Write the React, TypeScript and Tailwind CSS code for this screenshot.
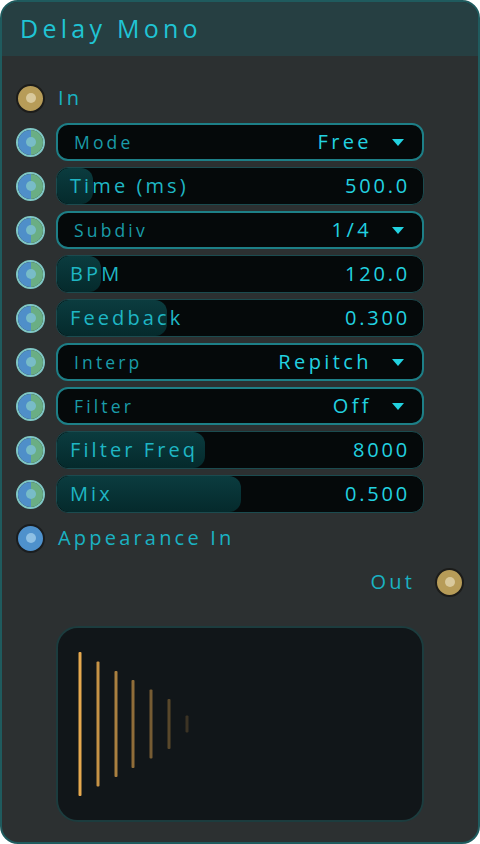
type Row =
  | { kind: "select"; label: string; value: string }
  | { kind: "slider"; label: string; value: string; fill: number };

const rows: Row[] = [
  { kind: "select", label: "Mode", value: "Free" },
  { kind: "slider", label: "Time (ms)", value: "500.0", fill: 36 },
  { kind: "select", label: "Subdiv", value: "1/4" },
  { kind: "slider", label: "BPM", value: "120.0", fill: 44 },
  { kind: "slider", label: "Feedback", value: "0.300", fill: 110 },
  { kind: "select", label: "Interp", value: "Repitch" },
  { kind: "select", label: "Filter", value: "Off" },
  { kind: "slider", label: "Filter Freq", value: "8000", fill: 148 },
  { kind: "slider", label: "Mix", value: "0.500", fill: 184 },
];

const font = { fontFamily: '"Open Sans", "Liberation Sans", sans-serif' };

const GoldPort = () => (
  <div className="flex h-[29px] w-[29px] items-center justify-center rounded-full border-2 border-[#1c1c1a] bg-[#b79c58]">
    <div className="h-[10px] w-[10px] rounded-full bg-[#d9c99c]" />
  </div>
);

const SplitPort = () => (
  <div className="relative h-[29px] w-[29px] overflow-hidden rounded-full border-2 border-[#7fc6c4]">
    <div className="flex h-full w-full">
      <div className="h-full w-1/2 bg-[#4f8fc9]" />
      <div className="h-full w-1/2 bg-[#6aae84]" />
    </div>
    <div className="absolute left-1/2 top-1/2 h-[10px] w-[10px] -translate-x-1/2 -translate-y-1/2 rounded-full bg-[#78bcc8]" />
  </div>
);

const BluePort = () => (
  <div className="flex h-[29px] w-[29px] items-center justify-center rounded-full border-2 border-[#1a1d1f] bg-[#4e91cc]">
    <div className="h-[10px] w-[10px] rounded-full bg-[#8ec0e4]" />
  </div>
);

const Caret = () => (
  <svg width="12" height="7" viewBox="0 0 12 7" className="ml-[20px]">
    <path d="M0 0 L12 0 L6 7 Z" fill="#22d2e0" />
  </svg>
);

const Control = ({ row }: { row: Row }) => {
  if (row.kind === "select") {
    return (
      <div className="flex h-[38px] items-center rounded-[12px] border-2 border-[#1d7f87] bg-[#05090a] pl-[16px] pr-[18px]">
        <span className="text-[17.5px] tracking-[0.18em] text-[#1a9ca8]">{row.label}</span>
        <span className="ml-auto text-[20px] tracking-[0.17em] text-[#22d2e0]">{row.value}</span>
        <Caret />
      </div>
    );
  }
  return (
    <div className="relative flex h-[38px] items-center overflow-hidden rounded-[12px] border border-[#1b4b4f] bg-[#05090a] pl-[13px] pr-[13px]">
      <div
        className="absolute left-0 top-0 h-full rounded-[12px] bg-gradient-to-b from-[#0b3c3f] to-[#052a2c]"
        style={{ width: row.fill }}
      />
      <span className="relative text-[20px] tracking-[0.155em] text-[#1fb6c4]">{row.label}</span>
      <span className="relative ml-auto text-[20px] tracking-[0.14em] text-[#22d2e0]">{row.value}</span>
    </div>
  );
};

const bars = [
  { x: 22, h: 144, o: 1 },
  { x: 40, h: 125, o: 0.85 },
  { x: 58, h: 106, o: 0.72 },
  { x: 75, h: 88, o: 0.6 },
  { x: 93, h: 69, o: 0.48 },
  { x: 111, h: 50, o: 0.34 },
  { x: 129, h: 17, o: 0.2 },
];

export default function App() {
  return (
    <div className="min-h-[844px] w-[480px] bg-white" style={font}>
      <div className="flex h-[844px] w-[480px] flex-col overflow-hidden rounded-[18px] border-2 border-[#1f5b5e] bg-[#2c3031]">
        <div className="flex h-[54px] items-center bg-[#263f42] pl-[18px]">
          <h1 className="text-[25px] tracking-[0.17em] text-[#20c4d4]">Delay Mono</h1>
        </div>
        <div className="grid grid-cols-[29px_1fr_29px] gap-x-[11px] gap-y-[6px] px-[14px] pt-[23px]">
          <div className="flex h-[38px] items-center"><GoldPort /></div>
          <div className="flex h-[38px] items-center pl-[2px] text-[20px] tracking-[0.16em] text-[#1ab2c2]">In</div>
          <div />
          {rows.map((row) => (
            <div key={row.label} className="contents">
              <div className="flex h-[38px] items-center"><SplitPort /></div>
              <Control row={row} />
              <div />
            </div>
          ))}
          <div className="flex h-[38px] items-center"><BluePort /></div>
          <div className="flex h-[38px] items-center pl-[2px] text-[20px] tracking-[0.16em] text-[#1ab2c2]">Appearance In</div>
          <div />
          <div />
          <div className="flex h-[38px] items-center justify-end pr-[9px] text-[20px] tracking-[0.16em] text-[#1ab2c2]">Out</div>
          <div className="flex h-[38px] items-center"><GoldPort /></div>
          <div />
          <div className="mt-[19px] h-[196px] rounded-[22px] border-2 border-[#1c3c3e] bg-[#111619]">
            <svg width="364" height="192" viewBox="0 0 364 192">
              {bars.map((b) => (
                <rect
                  key={b.x}
                  x={b.x - 1.5}
                  y={96 - b.h / 2}
                  width="3"
                  height={b.h}
                  rx="1"
                  fill="#e6a94f"
                  opacity={b.o}
                />
              ))}
            </svg>
          </div>
          <div />
        </div>
      </div>
    </div>
  );
}
